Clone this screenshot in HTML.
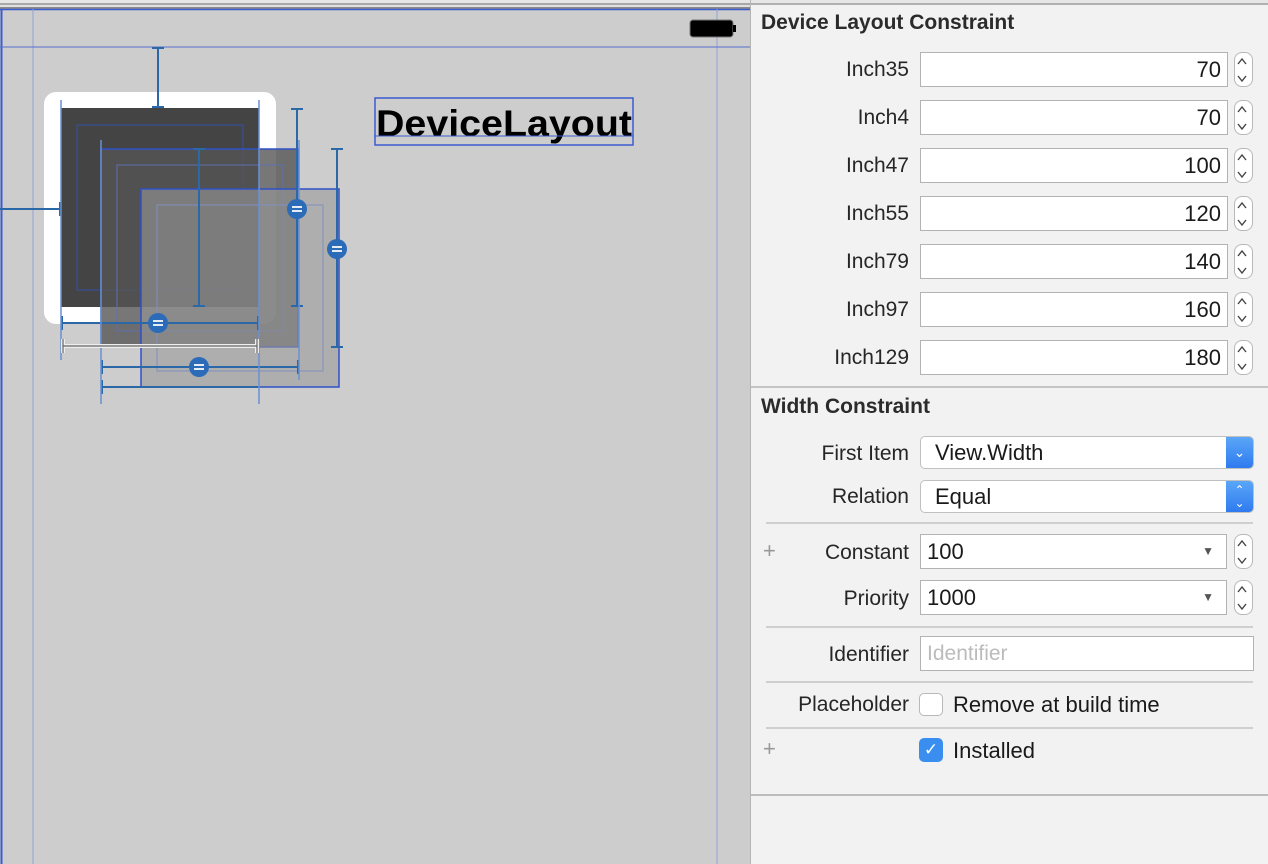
<!DOCTYPE html>
<html><head><meta charset="utf-8"><style>
*{margin:0;padding:0;box-sizing:border-box}
body{width:1268px;height:864px;overflow:hidden;background:#cdcdcd;font-family:"Liberation Sans",sans-serif;position:relative}
.p{position:absolute}
#panel{left:750px;top:0;width:518px;height:864px;background:#f2f2f2;border-left:1px solid #b5b5b5}
.lbl{position:absolute;right:359px;font-size:21px;color:#262626;text-align:right;white-space:nowrap}
.fld{position:absolute;left:169px;width:308px;height:35px;background:#fff;border:1px solid #b3b3b3;font-size:22px;color:#1a1a1a;line-height:33px;padding:0 6px}
.step{position:absolute;left:483px;width:19px;height:35px;border:1px solid #b8b8b8;border-radius:8px;background:#fff}
.sep{position:absolute;left:15px;width:487px;height:2px;background:#cfcfcf}
h3{position:absolute;left:10px;font-size:21px;font-weight:bold;color:#2b2b2b}
</style></head><body>
<svg class="p" style="left:0;top:0" width="750" height="864">
<rect x="0" y="0" width="750" height="3" fill="#e6e6e6"/>
<rect x="0" y="3" width="750" height="2" fill="#a8a8a8"/>
<rect x="0" y="5" width="750" height="2" fill="#e0e0e0"/>
<rect x="0" y="7" width="750" height="2" fill="#8a8a8a"/>
<line x1="0" y1="9.5" x2="750" y2="9.5" stroke="#3b5bd0" stroke-width="1.5"/>
<line x1="1.5" y1="9" x2="1.5" y2="864" stroke="#3b5bd0" stroke-width="2"/>
<line x1="33" y1="9" x2="33" y2="864" stroke="#8fa3d6" stroke-width="1"/>
<line x1="717" y1="9" x2="717" y2="864" stroke="#8fa3d6" stroke-width="1"/>
<line x1="0" y1="47" x2="750" y2="47" stroke="#5570d0" stroke-width="1"/>
<rect x="690" y="20" width="43" height="17" rx="3" fill="#000" stroke="#777" stroke-width="1"/>
<rect x="733" y="25" width="3" height="7" fill="#000"/>
<rect x="44" y="92" width="232" height="232" rx="12" fill="#fff"/>
<rect x="61" y="108" width="198" height="199" fill="#444"/>
<rect x="77" y="125" width="166" height="165" fill="none" stroke="#3550a8" stroke-width="1"/>
<rect x="101" y="149" width="197" height="198" fill="#555" fill-opacity=".8" stroke="#2f50c8" stroke-width="1.5"/>
<rect x="117" y="165" width="166" height="166" fill="none" stroke="#6070b0" stroke-width="1"/>
<rect x="141" y="189" width="198" height="198" fill="#999" fill-opacity=".6" stroke="#2f50c8" stroke-width="1.5"/>
<rect x="157" y="205" width="166" height="166" fill="none" stroke="#8090c0" stroke-width="1"/>
<g stroke="#2a68a8" stroke-width="2" fill="none">
<path d="M158 48V108M152 48H164M152 107H164"/>
<path d="M0 209H61M60 202V216"/>
<path d="M199 149V307M193 149H205M193 306H205"/>
<path d="M297 109V307M291 109H303M291 306H303"/>
<path d="M337 149V347M331 149H343M331 347H343"/>
<path d="M62 323H258M62 316V330M258 316V330"/>
<path d="M102 367H298M102 360V374M298 360V374"/>
<path d="M102 387H258M102 380V394"/>
<path d="M61 100V360M259 100V404M101 140V404M299 140V380" stroke="#6a90d0" stroke-width="1.5"/>
</g>
<path d="M63 346H257M63 339V353M257 339V353" stroke="#eee" stroke-width="4" fill="none"/>
<path d="M63 346H257M63 339V353M257 339V353" stroke="#666" stroke-width="1.2" fill="none"/>
<g fill="#2c6bb8"><circle cx="158" cy="323" r="10"/><circle cx="297" cy="209" r="10"/><circle cx="337" cy="249" r="10"/><circle cx="199" cy="367" r="10"/></g>
<g stroke="#fff" stroke-width="1.8"><path d="M153 321H163M153 325H163M292 207H302M292 211H302M332 247H342M332 251H342M194 365H204M194 369H204"/></g>
<text x="376" y="136" font-family="Liberation Sans" font-weight="bold" font-size="37" textLength="256" lengthAdjust="spacingAndGlyphs">DeviceLayout</text>
<rect x="375" y="98" width="258" height="47" fill="none" stroke="#3b5bd0" stroke-width="1.5"/>
<line x1="375" y1="136" x2="633" y2="136" stroke="#3b5bd0" stroke-width="1"/>
</svg>
<div id="panel" class="p">
<div class="p" style="left:0;top:0;width:518px;height:3px;background:#e6e6e6"></div>
<div class="p" style="left:0;top:3px;width:518px;height:2px;background:#b0b0b0"></div>
<h3 style="top:11px">Device Layout Constraint</h3>
<div class="lbl" style="top:58px">Inch35</div><div class="fld" style="top:52px;text-align:right">70</div><div class="step" style="top:52px"></div>
<div class="lbl" style="top:106px">Inch4</div><div class="fld" style="top:100px;text-align:right">70</div><div class="step" style="top:100px"></div>
<div class="lbl" style="top:154px">Inch47</div><div class="fld" style="top:148px;text-align:right">100</div><div class="step" style="top:148px"></div>
<div class="lbl" style="top:202px">Inch55</div><div class="fld" style="top:196px;text-align:right">120</div><div class="step" style="top:196px"></div>
<div class="lbl" style="top:250px">Inch79</div><div class="fld" style="top:244px;text-align:right">140</div><div class="step" style="top:244px"></div>
<div class="lbl" style="top:298px">Inch97</div><div class="fld" style="top:292px;text-align:right">160</div><div class="step" style="top:292px"></div>
<div class="lbl" style="top:346px">Inch129</div><div class="fld" style="top:340px;text-align:right">180</div><div class="step" style="top:340px"></div>
<div class="p" style="left:0;top:386px;width:518px;height:2px;background:#c4c4c4"></div>
<h3 style="top:395px">Width Constraint</h3>
<div class="lbl" style="top:442px">First Item</div>
<div class="p" style="left:169px;top:436px;width:334px;height:33px;background:#fff;border:1px solid #c0c0c0;border-radius:5px;font-size:22px;line-height:31px;padding-left:14px;color:#1a1a1a;overflow:hidden">View.Width<div class="p" style="right:0;top:0;width:27px;height:31px;background:linear-gradient(#5aa6f8,#2f7bef);color:#fff;font-size:14px;text-align:center;line-height:31px">&#8964;</div></div>
<div class="lbl" style="top:485px">Relation</div>
<div class="p" style="left:169px;top:480px;width:334px;height:33px;background:#fff;border:1px solid #c0c0c0;border-radius:5px;font-size:22px;line-height:31px;padding-left:14px;color:#1a1a1a;overflow:hidden">Equal<div class="p" style="right:0;top:0;width:27px;height:31px;background:linear-gradient(#5aa6f8,#2f7bef);color:#fff;font-size:12px;text-align:center;line-height:13px;padding-top:3px">&#8963;<br>&#8964;</div></div>
<div class="sep" style="top:522px"></div>
<div class="p" style="left:12px;top:538px;font-size:22px;color:#999">+</div>
<div class="lbl" style="top:541px">Constant</div>
<div class="fld" style="top:534px;width:307px">100<span class="p" style="right:12px;top:0;font-size:12px;color:#555">&#9660;</span></div><div class="step" style="top:534px"></div>
<div class="lbl" style="top:587px">Priority</div>
<div class="fld" style="top:580px;width:307px">1000<span class="p" style="right:12px;top:0;font-size:12px;color:#555">&#9660;</span></div><div class="step" style="top:580px"></div>
<div class="sep" style="top:626px"></div>
<div class="lbl" style="top:643px">Identifier</div>
<div class="fld" style="top:636px;width:334px;color:#bbb;font-size:21px">Identifier</div>
<div class="sep" style="top:681px"></div>
<div class="lbl" style="top:693px">Placeholder</div>
<div class="p" style="left:168px;top:693px;width:24px;height:23px;background:#fff;border:1px solid #b8b8b8;border-radius:5px"></div>
<div class="p" style="left:202px;top:692px;font-size:22px;color:#1a1a1a">Remove at build time</div>
<div class="sep" style="top:727px"></div>
<div class="p" style="left:12px;top:736px;font-size:22px;color:#999">+</div>
<div class="p" style="left:168px;top:738px;width:24px;height:24px;background:#3a8ef0;border-radius:5px;color:#fff;font-size:17px;text-align:center;line-height:24px">&#10003;</div>
<div class="p" style="left:202px;top:738px;font-size:22px;color:#1a1a1a">Installed</div>
<div class="p" style="left:0;top:794px;width:518px;height:2px;background:#bcbcbc"></div>
</div>
<svg class="p" style="left:0;top:0;pointer-events:none" width="1268" height="864">
<g fill="none" stroke="#444" stroke-width="1.4">
<path id="s" d="M1238 64l4-5 4 5M1238 76l4 5 4-5"/>
</g>
<g fill="none" stroke="#444" stroke-width="1.4">
<use href="#s" y="48"/><use href="#s" y="96"/><use href="#s" y="144"/><use href="#s" y="192"/><use href="#s" y="240"/><use href="#s" y="288"/><use href="#s" y="482"/><use href="#s" y="528"/>
</g>
</svg>
</body></html>
